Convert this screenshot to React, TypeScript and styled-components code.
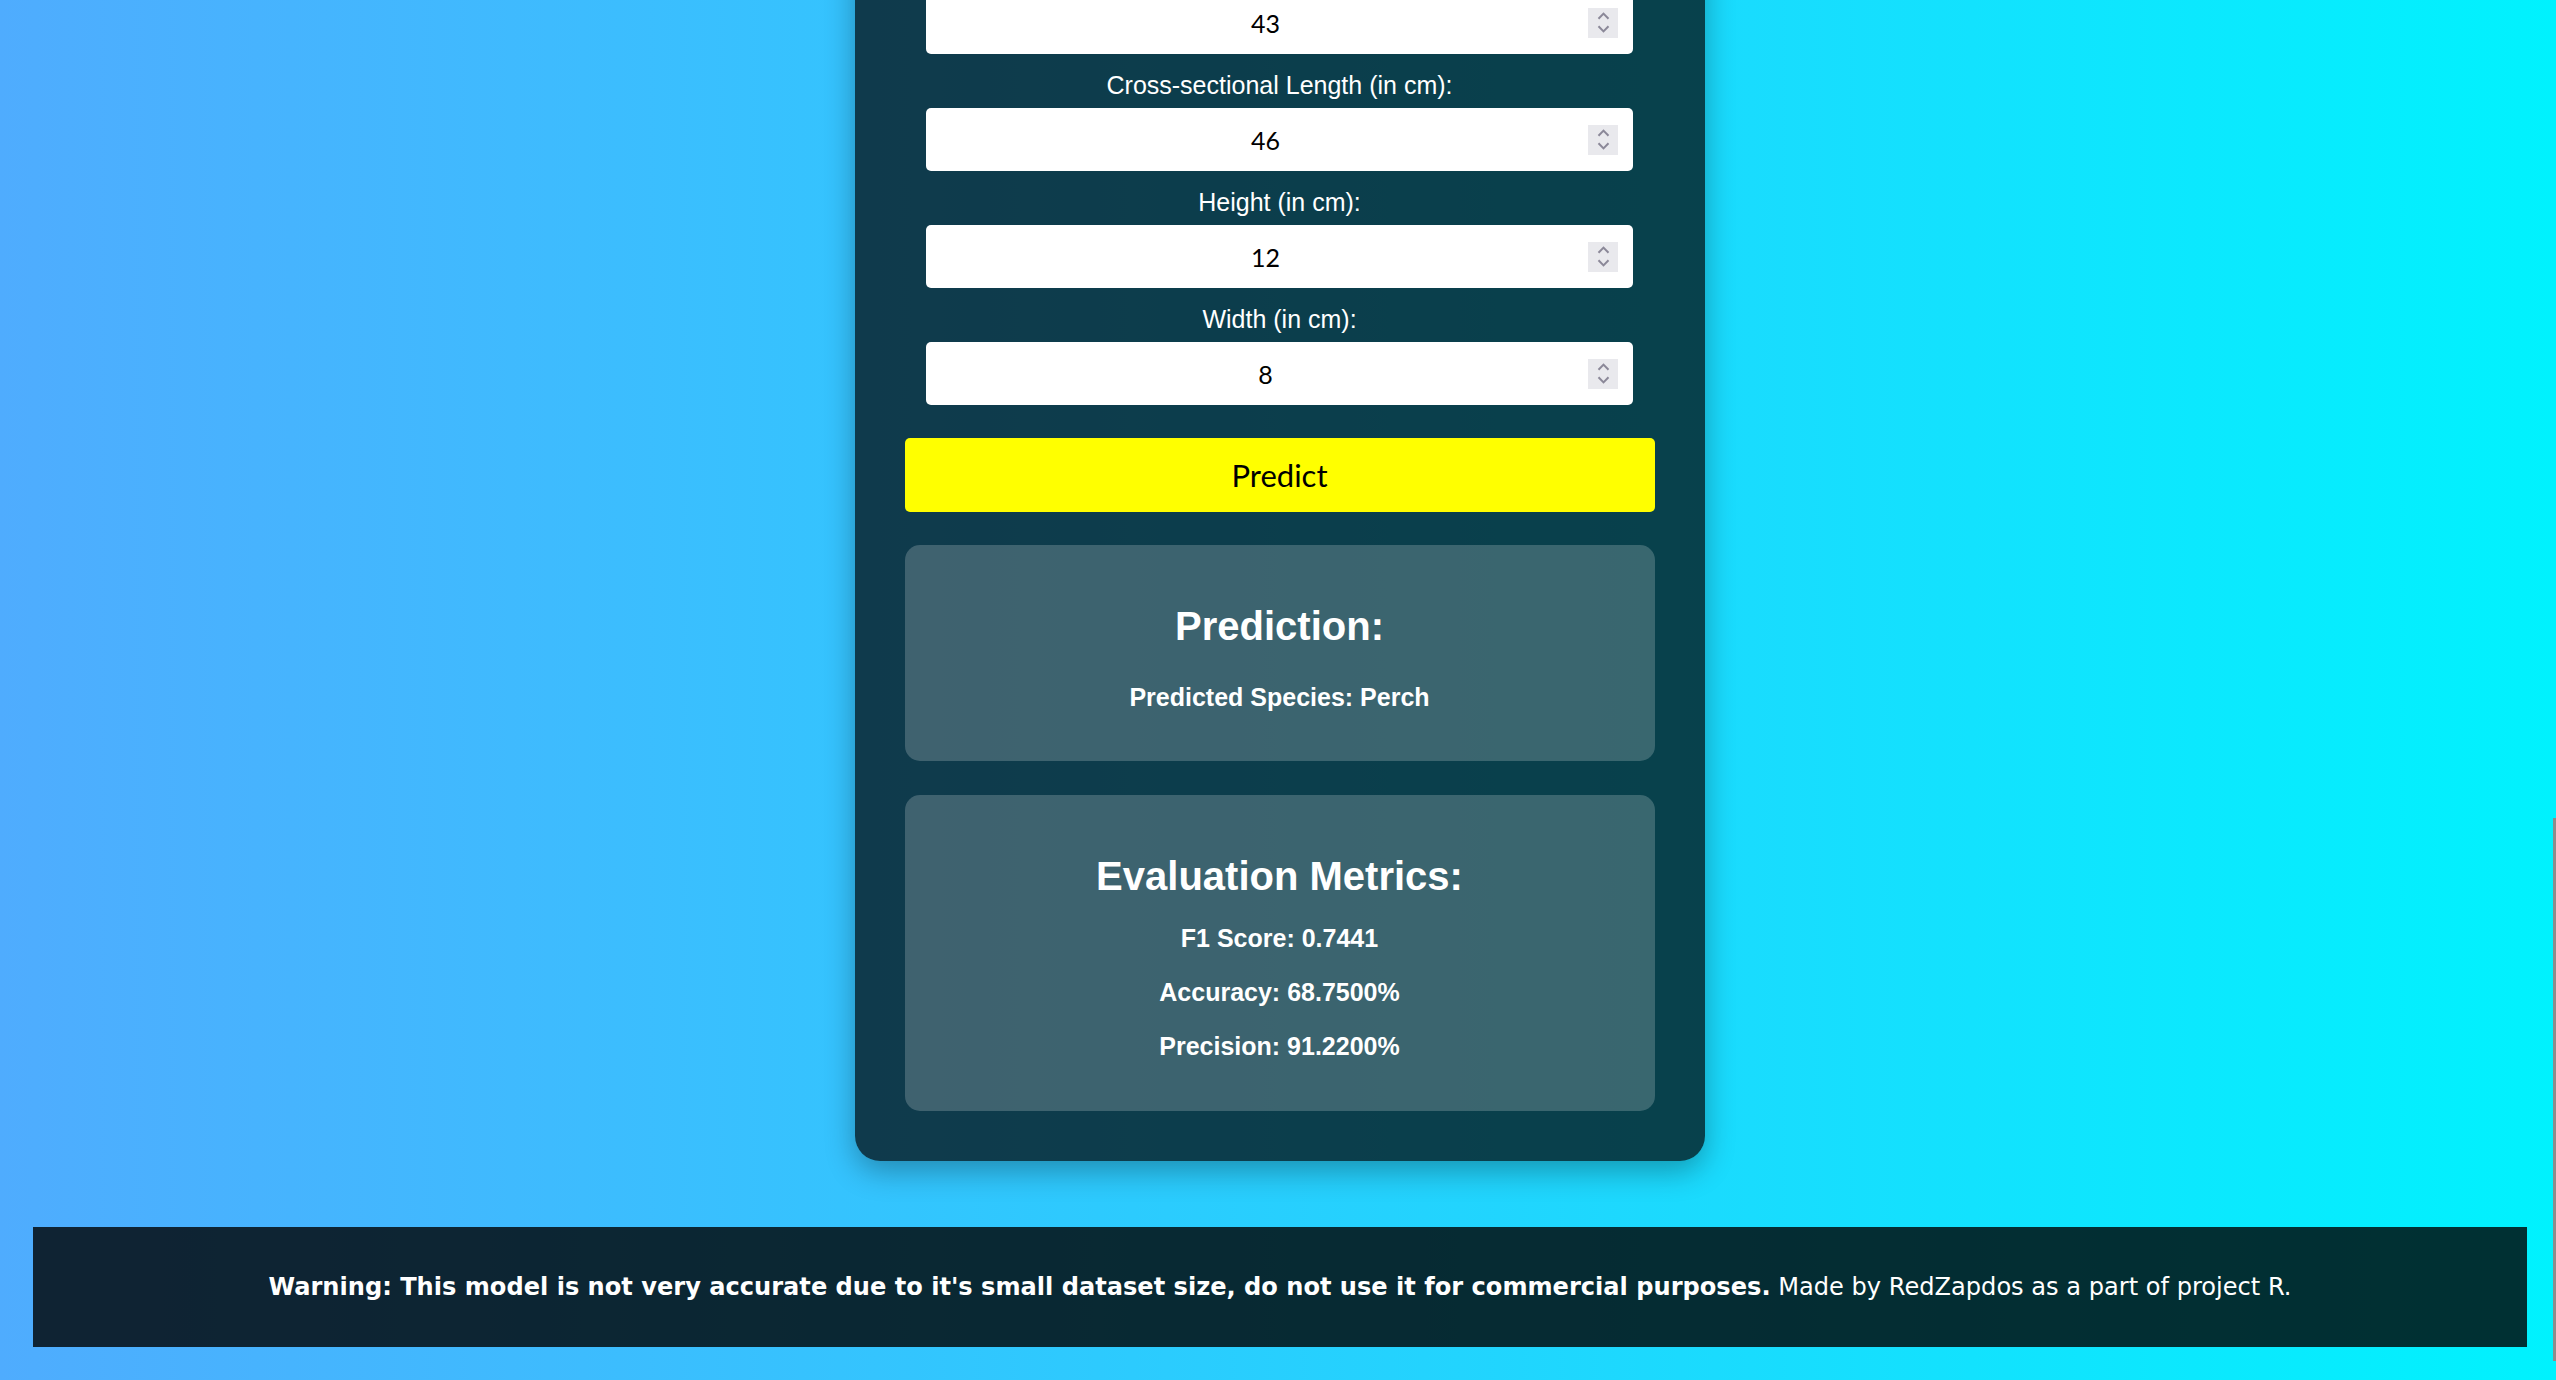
import { useLayoutEffect, useState } from 'react'
import styled, { createGlobalStyle } from 'styled-components'

const GlobalStyle = createGlobalStyle`
  html {
    scrollbar-width: none;
  }
  html::-webkit-scrollbar {
    display: none;
  }
  body {
    margin: 0;
    min-height: 100vh;
    background: linear-gradient(to right, #4facfe 0%, #00f2fe 100%);
    font-family: 'Liberation Sans', Arial, sans-serif;
    color: #fff;
  }
`

type Field = { id: string; label: string; value: number }

const initialFields: Field[] = [
  { id: 'weight', label: 'Weight (in g):', value: 1000 },
  { id: 'length1', label: 'Vertical Length (in cm):', value: 40 },
  { id: 'length2', label: 'Diagonal Length (in cm):', value: 43 },
  { id: 'length3', label: 'Cross-sectional Length (in cm):', value: 46 },
  { id: 'height', label: 'Height (in cm):', value: 12 },
  { id: 'width', label: 'Width (in cm):', value: 8 },
]

const metrics = [
  { name: 'F1 Score', value: '0.7441' },
  { name: 'Accuracy', value: '68.7500%' },
  { name: 'Precision', value: '91.2200%' },
]

export default function App() {
  const [fields, setFields] = useState(initialFields)

  useLayoutEffect(() => {
    window.scrollTo(0, document.documentElement.scrollHeight)
  }, [])

  const step = (id: string, by: number) =>
    setFields((list) => list.map((f) => (f.id === id ? { ...f, value: f.value + by } : f)))

  return (
    <>
      <GlobalStyle />
      <Page>
        <Card>
          <Title>Fish Species Predictor</Title>
          <Intro>Enter the measurements of the fish to predict its species.</Intro>
          <form onSubmit={(e) => e.preventDefault()}>
            {fields.map((f) => (
              <FieldGroup key={f.id}>
                <Label htmlFor={f.id}>{f.label}</Label>
                <InputWrap>
                  <NumberInput
                    id={f.id}
                    type="number"
                    value={f.value}
                    onChange={(e) =>
                      setFields((list) =>
                        list.map((x) => (x.id === f.id ? { ...x, value: Number(e.target.value) } : x))
                      )
                    }
                  />
                  <Stepper>
                    <StepButton type="button" onClick={() => step(f.id, 1)} aria-label="increase">
                      <svg width="13" height="8" viewBox="0 0 13 8">
                        <path d="M1.5 6.8 L6.5 1.6 L11.5 6.8" fill="none" stroke="#8b8898" strokeWidth="2" />
                      </svg>
                    </StepButton>
                    <StepButton type="button" onClick={() => step(f.id, -1)} aria-label="decrease">
                      <svg width="13" height="8" viewBox="0 0 13 8">
                        <path d="M1.5 1.2 L6.5 6.4 L11.5 1.2" fill="none" stroke="#8b8898" strokeWidth="2" />
                      </svg>
                    </StepButton>
                  </Stepper>
                </InputWrap>
              </FieldGroup>
            ))}
            <PredictButton type="submit">Predict</PredictButton>
          </form>

          <ResultBox>
            <BoxHeading>Prediction:</BoxHeading>
            <BoxLine $first>Predicted Species: Perch</BoxLine>
          </ResultBox>

          <ResultBox $metrics>
            <BoxHeading>Evaluation Metrics:</BoxHeading>
            {metrics.map((m) => (
              <BoxLine key={m.name}>
                {m.name}: {m.value}
              </BoxLine>
            ))}
          </ResultBox>
        </Card>

        <Footer>
          <strong>
            Warning: This model is not very accurate due to it's small dataset size, do not use it for
            commercial purposes.
          </strong>{' '}
          Made by RedZapdos as a part of project R.
        </Footer>
      </Page>
      <ScrollThumb />
    </>
  )
}

const Page = styled.div`
  display: flex;
  flex-direction: column;
  align-items: center;
  padding-top: 80px;
`

const Card = styled.div`
  box-sizing: border-box;
  width: 850px;
  padding: 40px 50px 50px;
  margin: 0 0 66px 3px;
  background: rgba(0, 0, 0, 0.7);
  border-radius: 25px;
  box-shadow: 0 10px 30px rgba(0, 0, 0, 0.3);
  text-align: center;
`

const Title = styled.h1`
  margin: 0 0 20px;
  font-size: 48px;
  line-height: 56px;
`

const Intro = styled.p`
  margin: 0 0 30px;
  font-size: 25px;
  line-height: 28px;
`

const FieldGroup = styled.div`
  & + & {
    margin-top: 17px;
  }
`

const Label = styled.label`
  display: block;
  margin-bottom: 9px;
  font-size: 25px;
  line-height: 28px;
  color: #fff;
`

const InputWrap = styled.div`
  position: relative;
  width: 707px;
  margin: 0 auto;
`

const NumberInput = styled.input`
  box-sizing: border-box;
  display: block;
  width: 100%;
  height: 63px;
  padding: 0 46px 0 18px;
  border: none;
  border-radius: 5px;
  background: #fff;
  color: #000;
  font-family: Lato, 'Noto Sans', sans-serif;
  font-size: 25px;
  text-align: center;
  outline: none;
  -moz-appearance: textfield;

  &::-webkit-inner-spin-button,
  &::-webkit-outer-spin-button {
    -webkit-appearance: none;
    margin: 0;
  }
`

const Stepper = styled.div`
  position: absolute;
  top: 50%;
  right: 15px;
  width: 30px;
  height: 30px;
  margin-top: -15px;
  display: flex;
  flex-direction: column;
  justify-content: center;
  background: #e9e9ed;
`

const StepButton = styled.button`
  height: 13px;
  display: flex;
  align-items: center;
  justify-content: center;
  padding: 0;
  border: none;
  background: transparent;
  cursor: pointer;
`

const PredictButton = styled.button`
  display: block;
  width: 100%;
  height: 74px;
  margin-top: 33px;
  border: none;
  border-radius: 5px;
  background: #ffff00;
  color: #000;
  font-family: Lato, 'Noto Sans', sans-serif;
  font-size: 31px;
  cursor: pointer;
`

const ResultBox = styled.div<{ $metrics?: boolean }>`
  margin-top: ${(p) => (p.$metrics ? 34 : 33)}px;
  padding: 59px 20px ${(p) => (p.$metrics ? 51 : 50)}px;
  border-radius: 15px;
  background: rgba(255, 255, 255, 0.2);
`

const BoxHeading = styled.h2`
  margin: 0;
  font-size: 40px;
  line-height: 44px;
  font-weight: bold;
`

const BoxLine = styled.p<{ $first?: boolean }>`
  margin: ${(p) => (p.$first ? 35 : 26)}px 0 0;
  font-size: 25px;
  line-height: 28px;
  font-weight: bold;
`

const Footer = styled.footer`
  align-self: stretch;
  margin: 0 29px 33px 33px;
  padding: 46px 20px;
  background: rgba(0, 0, 0, 0.8);
  font-family: 'DejaVu Sans', Verdana, sans-serif;
  font-size: 24.1px;
  line-height: 28px;
  text-align: center;
  color: #fff;
`

const ScrollThumb = styled.div`
  position: fixed;
  top: 818px;
  right: 0;
  width: 3px;
  height: 543px;
  background: #8c8c8c;
`
